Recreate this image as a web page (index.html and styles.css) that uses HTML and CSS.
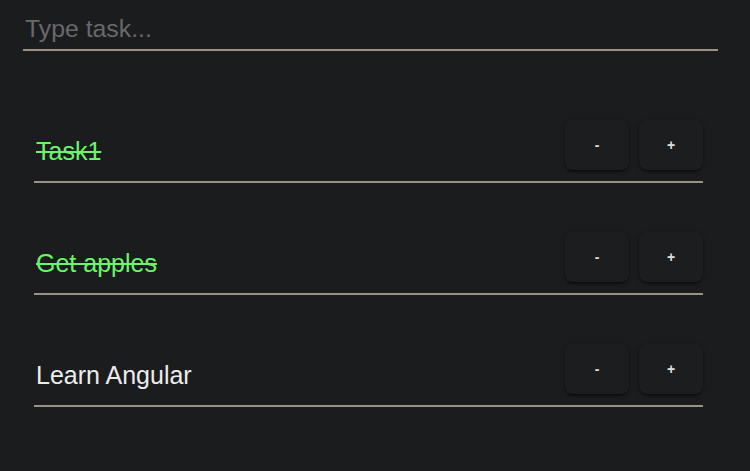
FILE: index.html
```html
<!DOCTYPE html>
<html>
<head>
<meta charset="utf-8">
<link rel="stylesheet" href="styles.css">
</head>
<body>
<div class="app">
  <input class="task-input" type="text" placeholder="Type task...">
  <div class="list">
    <div class="row">
      <span class="title done">Task1</span>
      <div class="actions">
        <button class="btn">-</button>
        <button class="btn">+</button>
      </div>
    </div>
    <div class="row">
      <span class="title done">Get apples</span>
      <div class="actions">
        <button class="btn">-</button>
        <button class="btn">+</button>
      </div>
    </div>
    <div class="row">
      <span class="title">Learn Angular</span>
      <div class="actions">
        <button class="btn">-</button>
        <button class="btn">+</button>
      </div>
    </div>
  </div>
</div>
</body>
</html>
```

FILE: styles.css
```css
html, body {
  margin: 0;
  padding: 0;
  background: #1b1c1e;
  height: 100%;
}
body {
  font-family: "Liberation Sans", Arial, sans-serif;
  color: #e8e8e8;
}
.app {
  padding: 14px 32px 0 23px;
}
.task-input {
  display: block;
  box-sizing: content-box;
  width: calc(100% - 2px);
  margin: 0;
  height: 29px;
  padding: 0 0 6px 2px;
  border: none;
  border-bottom: 2px solid #9b9181;
  background: transparent;
  color: #e8e8e8;
  font-family: "Liberation Sans", Arial, sans-serif;
  font-size: 24.8px;
  outline: none;
}
.task-input::placeholder {
  color: #68696a;
}
.list {
  margin: 20px 15px 0 11px;
}
.row {
  height: 110px;
  display: flex;
  align-items: flex-end;
  justify-content: space-between;
  border-bottom: 2px solid #9b9181;
}
.title {
  font-size: 25px;
  padding-left: 2px;
  margin-bottom: 15px;
  color: #ececec;
}
.title.done {
  color: #6cf46c;
  text-decoration: line-through;
}
.actions {
  display: flex;
  gap: 10px;
  margin-bottom: 11px;
}
.btn {
  width: 64px;
  height: 50px;
  border: none;
  border-radius: 8px;
  background: #1c1d1f;
  color: #e0e0e0;
  font-family: "Liberation Sans", Arial, sans-serif;
  font-size: 14px;
  font-weight: bold;
  box-shadow: 0 3px 1px -2px rgba(0,0,0,.3), 0 2px 2px 0 rgba(0,0,0,.22), 0 1px 5px 0 rgba(0,0,0,.2);
  cursor: pointer;
}
```
